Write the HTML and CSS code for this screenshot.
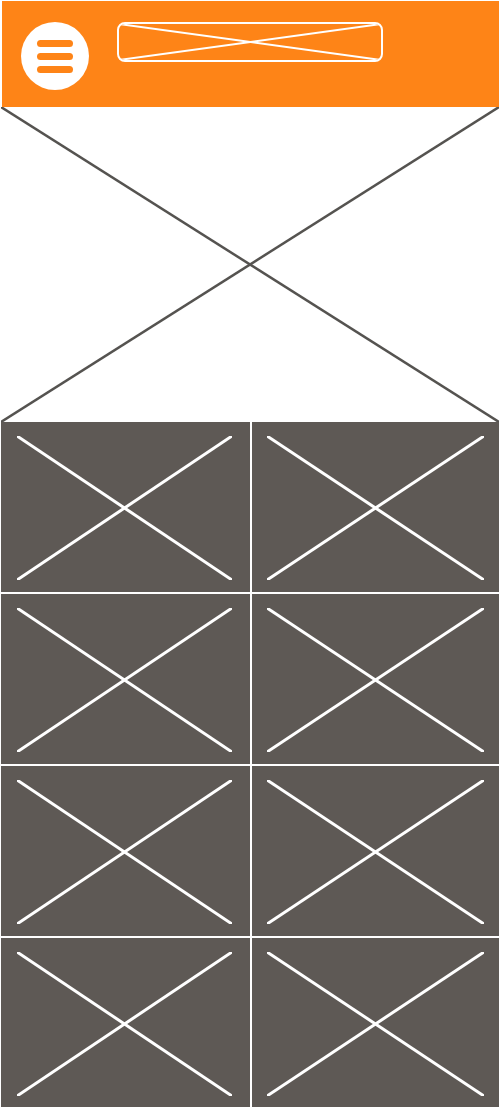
FILE: index.html
```html
<!DOCTYPE html>
<html lang="en">
<head>
<meta charset="utf-8">
<title>Wireframe</title>
<link rel="stylesheet" href="styles.css">
</head>
<body>
<div class="page">
  <header class="header">
    <button class="menu" aria-label="Menu">
      <span class="bar"></span><span class="bar"></span><span class="bar"></span>
    </button>
    <div class="logo">
      <svg class="x" viewBox="0 0 100 100" preserveAspectRatio="none">
        <line x1="0" y1="0" x2="100" y2="100" vector-effect="non-scaling-stroke"/>
        <line x1="0" y1="100" x2="100" y2="0" vector-effect="non-scaling-stroke"/>
      </svg>
    </div>
  </header>
  <div class="hero">
    <svg class="x" viewBox="0 0 100 100" preserveAspectRatio="none">
      <line x1="0" y1="0" x2="100" y2="100" vector-effect="non-scaling-stroke"/>
      <line x1="0" y1="100" x2="100" y2="0" vector-effect="non-scaling-stroke"/>
    </svg>
  </div>
  <div class="grid">
    <div class="tile left"><svg class="x" viewBox="0 0 100 100" preserveAspectRatio="none"><line x1="0" y1="0" x2="100" y2="100" vector-effect="non-scaling-stroke"/><line x1="0" y1="100" x2="100" y2="0" vector-effect="non-scaling-stroke"/></svg></div>
    <div class="tile right"><svg class="x" viewBox="0 0 100 100" preserveAspectRatio="none"><line x1="0" y1="0" x2="100" y2="100" vector-effect="non-scaling-stroke"/><line x1="0" y1="100" x2="100" y2="0" vector-effect="non-scaling-stroke"/></svg></div>
    <div class="tile left"><svg class="x" viewBox="0 0 100 100" preserveAspectRatio="none"><line x1="0" y1="0" x2="100" y2="100" vector-effect="non-scaling-stroke"/><line x1="0" y1="100" x2="100" y2="0" vector-effect="non-scaling-stroke"/></svg></div>
    <div class="tile right"><svg class="x" viewBox="0 0 100 100" preserveAspectRatio="none"><line x1="0" y1="0" x2="100" y2="100" vector-effect="non-scaling-stroke"/><line x1="0" y1="100" x2="100" y2="0" vector-effect="non-scaling-stroke"/></svg></div>
    <div class="tile left"><svg class="x" viewBox="0 0 100 100" preserveAspectRatio="none"><line x1="0" y1="0" x2="100" y2="100" vector-effect="non-scaling-stroke"/><line x1="0" y1="100" x2="100" y2="0" vector-effect="non-scaling-stroke"/></svg></div>
    <div class="tile right"><svg class="x" viewBox="0 0 100 100" preserveAspectRatio="none"><line x1="0" y1="0" x2="100" y2="100" vector-effect="non-scaling-stroke"/><line x1="0" y1="100" x2="100" y2="0" vector-effect="non-scaling-stroke"/></svg></div>
    <div class="tile left"><svg class="x" viewBox="0 0 100 100" preserveAspectRatio="none"><line x1="0" y1="0" x2="100" y2="100" vector-effect="non-scaling-stroke"/><line x1="0" y1="100" x2="100" y2="0" vector-effect="non-scaling-stroke"/></svg></div>
    <div class="tile right"><svg class="x" viewBox="0 0 100 100" preserveAspectRatio="none"><line x1="0" y1="0" x2="100" y2="100" vector-effect="non-scaling-stroke"/><line x1="0" y1="100" x2="100" y2="0" vector-effect="non-scaling-stroke"/></svg></div>
  </div>
</div>
</body>
</html>
```

FILE: styles.css
```css
html, body {
  margin: 0;
  padding: 0;
  background: #ffffff;
  font-family: "Liberation Sans", Arial, sans-serif;
}

.page {
  width: 498px;
  padding: 1px 2px 0 1px;
  display: flex;
  flex-direction: column;
}

.header {
  margin-left: 1px;
  height: 106px;
  background: #fe8417;
  display: flex;
  align-items: flex-start;
  gap: 28px;
  padding: 21px 0 0 19px;
  box-sizing: border-box;
}

.menu {
  width: 68px;
  height: 68px;
  border-radius: 50%;
  background: #ffffff;
  border: 0;
  padding: 0;
  display: flex;
  flex-direction: column;
  align-items: center;
  justify-content: center;
  gap: 6px;
  flex: none;
}

.bar {
  display: block;
  width: 36px;
  height: 7px;
  border-radius: 3.5px;
  background: #fe8417;
}

.logo {
  width: 266px;
  height: 40px;
  border: 2px solid #ffffff;
  border-radius: 8px;
  box-sizing: border-box;
  display: flex;
  overflow: hidden;
}

.logo .x line {
  stroke: #ffffff;
  stroke-width: 2;
}

.x {
  display: block;
  width: 100%;
  height: 100%;
}

.hero {
  height: 315px;
  display: flex;
}

.hero .x line {
  stroke: #555350;
  stroke-width: 2.5;
}

.grid {
  display: grid;
  grid-template-columns: 249px 247px;
  grid-template-rows: repeat(4, 170px);
  gap: 2px;
}

.tile {
  background: #5e5955;
  box-sizing: border-box;
  display: flex;
}

.tile.left {
  padding: 14px 18px 12px 16px;
}

.tile.right {
  padding: 14px 15px 12px 15px;
}

.tile .x line {
  stroke: #ffffff;
  stroke-width: 3;
}
```
